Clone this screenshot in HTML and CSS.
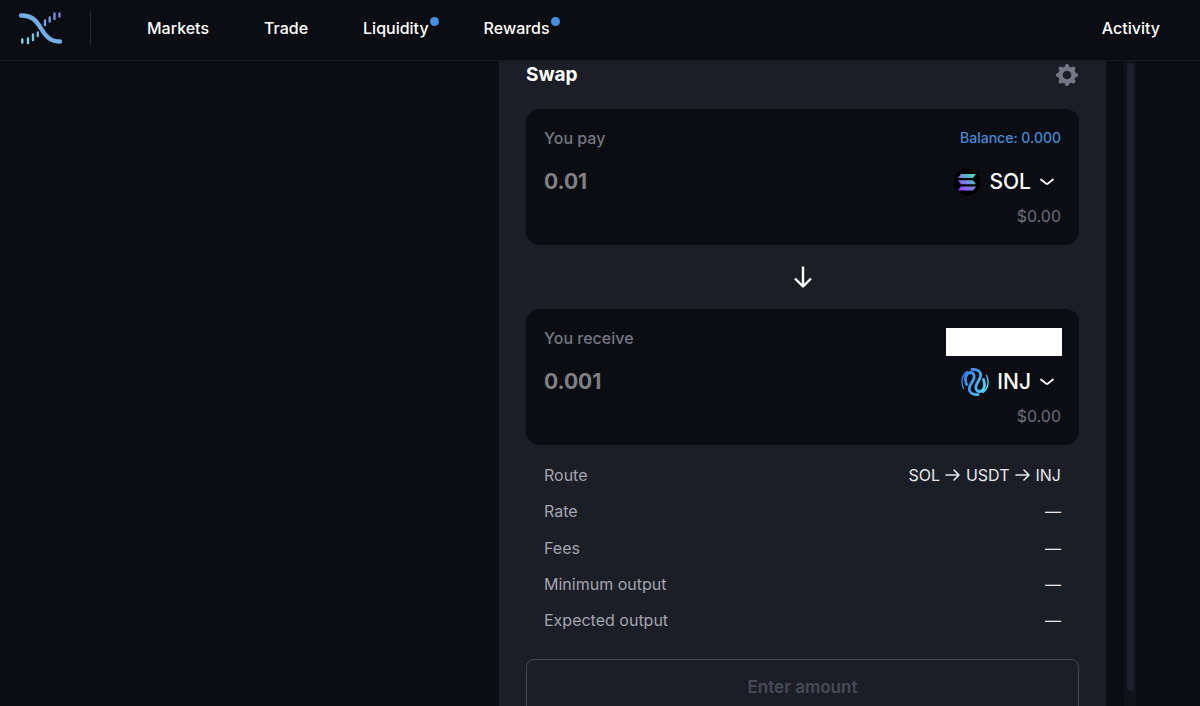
FILE: index.html
```html
<!DOCTYPE html>
<html lang="en">
<head>
<meta charset="utf-8">
<title>Swap</title>
<meta name="viewport" content="width=device-width, initial-scale=1">
<link rel="stylesheet" href="styles.css">
</head>
<body>
<header class="topbar">
  <a class="logo" href="#" aria-label="Home">
    <svg width="46" height="36" viewBox="0 0 46 36" fill="none" stroke-linecap="round">
      <defs>
        <linearGradient id="bars" x1="0" y1="32" x2="44" y2="0" gradientUnits="userSpaceOnUse">
          <stop offset="0" stop-color="#7de0dc"/><stop offset=".5" stop-color="#70abe8"/><stop offset="1" stop-color="#7772dc"/>
        </linearGradient>
      </defs>
      <path d="M3 5.500C13 5 18 10 23 18.500S33 31.500 42 31.500" stroke="#73ace6" stroke-width="4.400"/>
      <path d="M4.300 29.500v3M10 28.500v4.500M15 24.500v5.500M19.800 22.500v3.500M27 10.500v4.500M31.700 7.500v4M36.500 3.500v5.500M41.500 3.500v3" stroke="url(#bars)" stroke-width="2.400"/>
    </svg>
  </a>
  <nav class="nav">
    <a href="#">Markets</a>
    <a href="#">Trade</a>
    <a href="#">Liquidity<span class="dot"></span></a>
    <a href="#">Rewards<span class="dot"></span></a>
  </nav>
  <a class="activity" href="#">Activity</a>
</header>
<main class="page">
  <section class="panel">
    <div class="panel-head">
      <h1>Swap</h1>
      <button class="icon-button" type="button" aria-label="Settings">
        <svg width="24" height="24" viewBox="0 0 24 24">
          <g fill="#747785">
            <rect id="tooth" x="10" y="1" width="4" height="22" rx="1.800"/>
            <use href="#tooth" transform="rotate(45 12 12)"/>
            <use href="#tooth" transform="rotate(90 12 12)"/>
            <use href="#tooth" transform="rotate(135 12 12)"/>
            <circle cx="12" cy="12" r="8.800"/>
          </g>
          <circle cx="12" cy="12" r="4.300" fill="#1b1e27"/>
        </svg>
      </button>
    </div>

    <div class="card">
      <div class="line">
        <label for="pay">You pay</label>
        <button class="balance" type="button">Balance: 0.000</button>
      </div>
      <div class="line amount-line">
        <input class="amount" id="pay" type="text" inputmode="decimal" placeholder="0.01">
        <button class="token" type="button">
          <svg width="28" height="28" viewBox="0 0 28 28">
            <defs>
              <linearGradient id="sol" x1="6" y1="23" x2="22" y2="5" gradientUnits="userSpaceOnUse">
                <stop offset=".1" stop-color="#9945ff"/><stop offset=".5" stop-color="#718cdf"/><stop offset="1" stop-color="#43eaa0"/>
              </linearGradient>
            </defs>
            <circle cx="14" cy="14" r="13.500" fill="#000"/>
            <path fill="url(#sol)" d="M8 6H23L20 10H5ZM5 12.200H20L23 16.200H8ZM8 18.400H23L20 22.400H5Z"/>
          </svg>
          <span>SOL</span>
          <svg class="chevron" width="16" height="10" viewBox="0 0 16 10"><path d="M2 2.500L7 6.500Q8 7.300 9 6.500L14 2.500"/></svg>
        </button>
      </div>
      <div class="fiat">$0.00</div>
    </div>

    <button class="flip" type="button" aria-label="Switch tokens">
      <svg width="20" height="24" viewBox="0 0 20 24" fill="none" stroke="#fff" stroke-width="2.400" stroke-linejoin="round"><path d="M10 1.500V21.500M2 13.500l8 8 8-8"/></svg>
    </button>

    <div class="card">
      <div class="line">
        <label for="receive">You receive</label>
        <span class="blank"></span>
      </div>
      <div class="line amount-line">
        <input class="amount" id="receive" type="text" inputmode="decimal" placeholder="0.001">
        <button class="token" type="button">
          <svg width="28" height="28" viewBox="0 0 28 28" fill="none" stroke-linecap="round">
            <defs>
              <linearGradient id="inj" x1="0" y1="8" x2="28" y2="20" gradientUnits="userSpaceOnUse">
                <stop offset="0" stop-color="#3c7df0"/><stop offset=".5" stop-color="#489fee"/><stop offset="1" stop-color="#56e4f4"/>
              </linearGradient>
            </defs>
            <g stroke="url(#inj)">
              <path stroke-width="1.400" d="M6 3.500C1 7 -.500 14 2.500 20.500M22 24.500C27 21 28.500 14 25.500 7.500"/>
              <path stroke-width="2.800" d="M5.500 16.500C3.500 11 4.500 5 9 4.500C13.500 4.300 14 9 12 12.500C10 16 7.200 19 8.500 22.500C10 26 13.500 26.800 17 26.600"/>
              <path stroke-width="2.800" d="M22.500 11.500C24.500 17 23.500 23 19 23.500C14.500 23.700 14 19 16 15.500C18 12 20.800 9 19.500 5.500C18 2 14.500 1.200 11 1.400"/>
            </g>
          </svg>
          <span>INJ</span>
          <svg class="chevron" width="16" height="10" viewBox="0 0 16 10"><path d="M2 2.500L7 6.500Q8 7.300 9 6.500L14 2.500"/></svg>
        </button>
      </div>
      <div class="fiat">$0.00</div>
    </div>

    <dl class="details">
      <div><dt>Route</dt><dd class="route">SOL
        <svg width="16" height="14" viewBox="0 0 16 14"><path d="M1 7h13M9 2l5 5-5 5"/></svg>
        USDT
        <svg width="16" height="14" viewBox="0 0 16 14"><path d="M1 7h13M9 2l5 5-5 5"/></svg>
        INJ</dd></div>
      <div><dt>Rate</dt><dd>—</dd></div>
      <div><dt>Fees</dt><dd>—</dd></div>
      <div><dt>Minimum output</dt><dd>—</dd></div>
      <div><dt>Expected output</dt><dd>—</dd></div>
    </dl>

    <button class="submit" type="button" disabled>Enter amount</button>
  </section>
  <div class="track"><div class="thumb"></div></div>
</main>
</body>
</html>
```
FILE: styles.css
```css
* { box-sizing: border-box; }

body {
  margin: 0;
  height: 100vh;
  display: flex;
  flex-direction: column;
  overflow: hidden;
  background: #0b0d12;
  color: #fff;
  font: 400 16px/22px Inter, "Liberation Sans", sans-serif;
}

a { color: inherit; text-decoration: none; }

button {
  border: 0;
  padding: 0;
  background: none;
  color: inherit;
  font: inherit;
}

.topbar {
  flex: none;
  height: 61px;
  padding: 0 40px 5px 18px;
  display: flex;
  align-items: center;
  border-bottom: 1px solid #181a21;
  font-weight: 500;
}

.logo {
  width: 73px;
  height: 36px;
  border-right: 1px solid #22242e;
}

.nav {
  display: flex;
  gap: 55px;
  padding-left: 56px;
}

.nav a { position: relative; }

.dot {
  position: absolute;
  top: 0;
  right: -10px;
  width: 9px;
  height: 9px;
  border-radius: 50%;
  background: #478de0;
}

.activity { margin-left: auto; }

.page {
  flex: 1;
  min-height: 0;
  display: grid;
  grid-template-columns: 499fr 607fr 94fr;
  grid-template-rows: minmax(0, 1fr);
  overflow: hidden;
}

.panel {
  grid-column: 2;
  padding: 0 27px;
  background: #1b1e27;
}

.panel-head {
  height: 48px;
  padding-bottom: 20px;
  display: flex;
  align-items: center;
  justify-content: space-between;
}

h1 {
  margin: 0;
  font-size: 19px;
  font-weight: 700;
}

.icon-button { width: 24px; height: 24px; }
svg { display: block; }

.card {
  height: 136px;
  padding: 18px;
  border-radius: 14px;
  background: #0b0d12;
}

.line {
  height: 22px;
  display: flex;
  align-items: center;
  justify-content: space-between;
}

label { color: #747783; font-weight: 500; }
.balance { color: #478ad5; font-size: 14px; font-weight: 500; }

.blank {
  align-self: flex-start;
  width: 116px;
  height: 28px;
  margin: 1px -1px 0 0;
  background: #fff;
}

.amount-line { height: 34px; margin-top: 16px; }

.amount {
  min-width: 0;
  width: 240px;
  border: 0;
  padding: 0;
  background: none;
  color: #fff;
  font: 700 21px/28px Inter, "Liberation Sans", sans-serif;
}

.amount::placeholder { color: #808084; opacity: 1; }

.token {
  display: flex;
  align-items: center;
  gap: 8px;
  padding-right: 6px;
  font-size: 21px;
  font-weight: 500;
}

.chevron { fill: none; stroke: #fff; stroke-width: 1.8; stroke-linecap: round; }
.fiat { margin-top: 6px; color: #6c6e7b; text-align: right; }

.flip {
  display: flex;
  align-items: center;
  justify-content: center;
  width: 40px;
  height: 64px;
  margin: 0 auto;
}

.details {
  height: 167px;
  margin: 19px 18px 28px;
  display: flex;
  flex-direction: column;
  justify-content: space-between;
}

.details div { display: flex; justify-content: space-between; }
dt { color: #a3a5af; }
dd { margin: 0; color: #e8e8ec; }
.route { display: flex; align-items: center; gap: 5px; }
.route svg { fill: none; stroke: #e8e8ec; stroke-width: 1.6; stroke-linecap: round; stroke-linejoin: round; }

.submit {
  width: 100%;
  height: 56px;
  border: 1px solid #454752;
  border-radius: 8px;
  color: #484a57;
  font-size: 17px;
  font-weight: 600;
}

.track {
  width: 12px;
  margin-left: 18px;
  padding: 2px 2px 15px 3px;
  background: #11131a;
}

.thumb { height: 100%; border-radius: 4px; background: #1c202d; }
```
